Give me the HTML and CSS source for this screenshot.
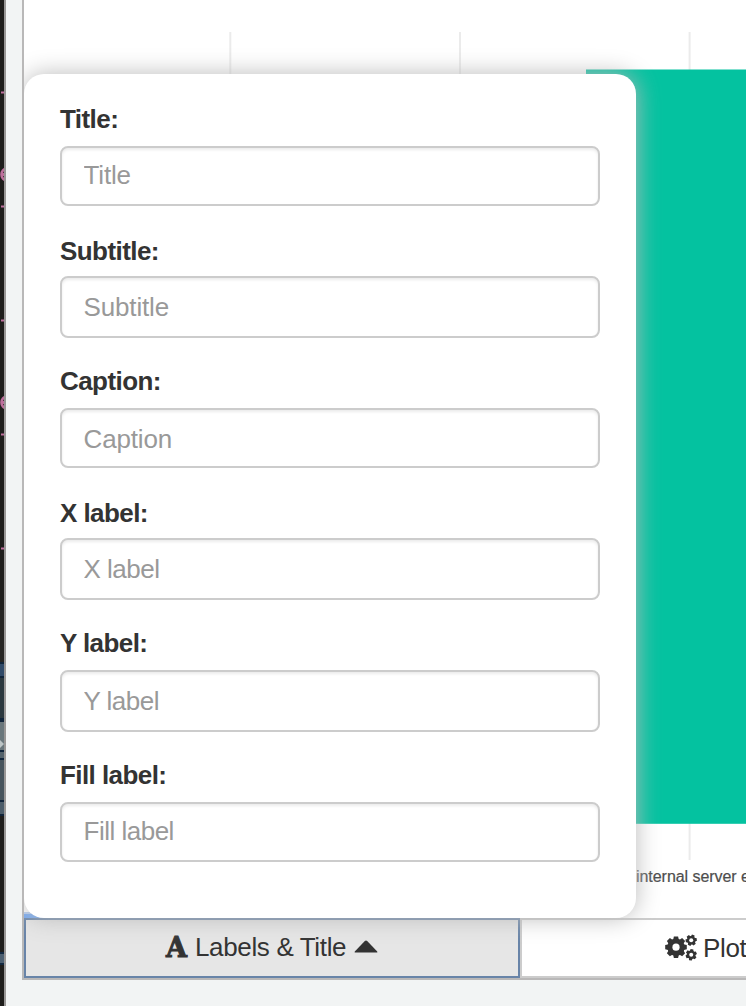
FILE: index.html
```html
<!DOCTYPE html>
<html lang="en">
<head>
<meta charset="utf-8">
<title>Labels &amp; Title</title>
<link rel="stylesheet" href="styles.css">
</head>
<body>
<div class="page">
  <svg class="backdrop" width="4" height="1006" viewBox="0 0 4 1006">
    <rect width="4" height="1006" fill="#1e1d1b"/>
    <path d="M1 92.5h3M1 206.5h3M1 320.5h3M1 434.5h3M1 548.5h3" stroke="#bd6f9b" stroke-width="2"/>
    <g fill="none" stroke="#bd6f9b" stroke-width="2.8"><ellipse cx="6" cy="174.5" rx="4.4" ry="5.4"/><path d="M2 174.5h2"/><ellipse cx="6" cy="402.5" rx="4.4" ry="5.4"/><path d="M2 402.5h2"/></g>
    <rect y="610" width="4" height="52" fill="#262523"/>
    <rect y="662" width="4" height="154" fill="#10243a"/>
    <rect y="664" width="4" height="12" fill="#304a68"/>
    <rect y="678" width="4" height="40" fill="#2b383e"/>
    <rect y="722" width="4" height="28" fill="#69767b"/>
    <path d="M0 740l4 4-4 4z" fill="#bcc4c5"/>
    <rect y="752" width="4" height="6" fill="#53626b"/>
    <rect y="760" width="4" height="40" fill="#46545c"/>
    <rect y="802" width="4" height="12" fill="#4b5c69"/>
    <rect y="952" width="4" height="13" fill="#122840"/>
    <rect y="954" width="4" height="9" fill="#4c5f70"/>
  </svg>
  <main class="window">
    <section class="viewer">
      <div class="plot">
        <svg class="chart" width="722" height="918" viewBox="24 0 722 918">
          <path d="M230.3 32v828M460 32v828M689.6 32v828" stroke="#ebebeb" stroke-width="2"/>
          <rect x="586" y="69.5" width="160" height="754.3" fill="#04c2a0"/>
          <text class="tick" x="636" y="882">internal server e</text>
          <rect x="24" y="912" width="30" height="6" fill="#72a8f4"/>
          <rect x="24" y="912" width="30" height="2" fill="#b4cdf2"/>
        </svg>
      </div>
      <nav class="toolbar">
        <button class="tab active"><span class="font-icon">A</span><span class="tab-text">Labels &amp; Title</span><svg class="caret" width="24" height="13" viewBox="0 0 24 13"><path d="M1.2 12.6Q0 12.6.8 11.5L10.8 1Q12 0 13.2 1L23.2 11.5Q24 12.6 22.8 12.6z"/></svg></button>
        <button class="tab plot-tab">
          <svg class="cogs" width="32" height="28" viewBox="0 0 32 28">
            <defs>
              <path id="tooth" d="M-3 -7L-2.1 -10.8H2.1L3 -7V7L2.1 10.8H-2.1L-3 7z"/>
              <path id="small-tooth" d="M-1.9 -3L-1.4 -5.6H1.4L1.9 -3V3L1.4 5.6H-1.4L-1.9 3z"/>
              <g id="teeth"><use href="#tooth"/><use href="#tooth" transform="rotate(45)"/><use href="#tooth" transform="rotate(90)"/><use href="#tooth" transform="rotate(135)"/></g>
              <g id="small-teeth"><use href="#small-tooth"/><use href="#small-tooth" transform="rotate(60)"/><use href="#small-tooth" transform="rotate(120)"/></g>
              <mask id="holes"><rect width="32" height="28" fill="white"/><g fill="black"><circle cx="11" cy="13.2" r="3.6"/><circle cx="26.2" cy="6.2" r="2"/><circle cx="26.2" cy="20.8" r="2"/></g></mask>
            </defs>
            <g mask="url(#holes)"><use href="#teeth" x="11" y="13.2"/><circle cx="11" cy="13.2" r="8.6"/><use href="#small-teeth" transform="translate(26.2 6.2) rotate(22)"/><circle cx="26.2" cy="6.2" r="4.3"/><use href="#small-teeth" transform="translate(26.2 20.8) rotate(8)"/><circle cx="26.2" cy="20.8" r="4.3"/></g>
          </svg><span class="tab-text plot-text">Plot</span></button>
      </nav>
      <form class="popover">
        <div class="field"><label for="title">Title:</label><input id="title" placeholder="Title"></div>
        <div class="field snug tall"><label for="subtitle">Subtitle:</label><input id="subtitle" placeholder="Subtitle"></div>
        <div class="field"><label for="caption">Caption:</label><input id="caption" class="low" placeholder="Caption"></div>
        <div class="field snug tall"><label for="xlabel">X label:</label><input id="xlabel" class="tight" placeholder="X label"></div>
        <div class="field tall"><label for="ylabel">Y label:</label><input id="ylabel" class="tight" placeholder="Y label"></div>
        <div class="field"><label for="filllabel">Fill label:</label><input id="filllabel" class="tight" placeholder="Fill label"></div>
      </form>
    </section>
  </main>
</div>
</body>
</html>
```
FILE: styles.css
```css
* { box-sizing: border-box; }
body { margin: 0; overflow: hidden; font-family: "Liberation Sans", Arial, sans-serif; color: #333; }
.page { display: flex; width: 746px; height: 1006px; overflow: hidden; background: #f2f4f4; }
.backdrop { flex: none; display: block; }
.window { flex: 1; min-width: 0; border-left: 2px solid #999796; padding-left: 16px; }
.viewer { position: relative; height: 980px; overflow: hidden; border-left: 2px solid #b9b8b8; border-bottom: 2px solid #b9b8b8; background: #fff; }
.plot { height: 918px; overflow: hidden; }
.chart { display: block; }
.tick { font-size: 16px; letter-spacing: -0.05px; fill: #4d4d4d; stroke: #4d4d4d; stroke-width: .2px; }
.toolbar { display: flex; height: 60px; }
.tab { flex: none; display: flex; align-items: center; height: 60px; border: 2px solid #ccc; background: #fff; padding: 0; font: 26px/36px "Liberation Sans", Arial, sans-serif; color: #333; white-space: nowrap; }
.tab.active { width: 496px; padding-left: 138px; border-color: #6884a8; background: #e6e6e6; }
.plot-tab { width: 496px; padding-left: 143px; }
.font-icon { width: 25px; margin-right: 6px; font: bold 27px/36px "DejaVu Serif", serif; -webkit-text-stroke: 1px #333; }
.tab-text { letter-spacing: -0.35px; margin-bottom: 2px; }
.plot-text { margin-bottom: 1px; }
.caret { margin-left: 8px; margin-bottom: 4px; fill: #333; }
.cogs { margin-right: 6px; fill: #333; }
.popover { position: absolute; left: 0; top: 74px; width: 612px; height: 844px; padding: 30px 36px 0; border-radius: 20px; background: #fff; box-shadow: 0 0 24px #bababa; }
.field { display: flex; flex-direction: column; gap: 12px; height: 132px; }
.field:nth-child(even) { height: 130px; }
.field.snug { gap: 10px; }
.field label { font-size: 26px; line-height: 30px; height: 30px; font-weight: bold; letter-spacing: -0.57px; }
.field input { width: 540px; height: 60px; padding: 0 21.5px 2px; border: 2px solid #ccc; border-radius: 8px; background: #fff; box-shadow: inset 0 2px 3px rgba(0, 0, 0, .08); font: 26px "Liberation Sans", Arial, sans-serif; letter-spacing: -0.15px; outline: none; }
.field.tall input { height: 62px; padding-bottom: 0; }
.field input.low { padding: 2px 21.5px 0; }
.field input.tight { letter-spacing: -0.5px; }
.field input::placeholder { color: #999; opacity: 1; }
```
